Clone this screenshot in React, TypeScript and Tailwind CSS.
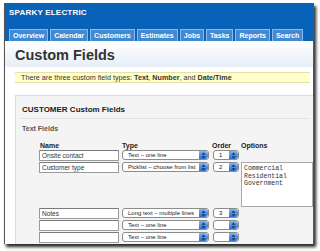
import React from 'react';

const tabs = ['Overview', 'Calendar', 'Customers', 'Estimates', 'Jobs', 'Tasks', 'Reports', 'Search'];

function Spinner() {
    return (
        <div className="h-full w-[9px] rounded-r-[3px] bg-gradient-to-b from-[#7fb2ee] to-[#2f6fd0] flex items-center justify-center">
            <svg width="5" height="7" viewBox="0 0 5 7">
                <path d="M2.5 0.5 L4.5 2.8 H0.5 Z" fill="#10306a" />
                <path d="M2.5 6.5 L4.5 4.2 H0.5 Z" fill="#10306a" />
            </svg>
        </div>
    );
}

function Select({ value, width }: { value: string; width: string }) {
    return (
        <div className={`${width} h-[10px] flex items-stretch rounded-[3px] border border-[#8c8c8c] bg-white overflow-hidden`}>
            <div className="flex-1 pl-[5px] text-[6px] leading-[8px] text-[#222] whitespace-nowrap overflow-hidden">{value}</div>
            <Spinner />
        </div>
    );
}

function NameInput({ value }: { value: string }) {
    return (
        <div className="w-[80px] h-[11px] border border-[#9a9a9a] border-t-[#7a7a7a] bg-white pl-[2px] text-[6.5px] leading-[9px] text-[#333] whitespace-nowrap">
            {value}
        </div>
    );
}

function Row({ name, type, order }: { name: string; type: string; order: string }) {
    return (
        <div className="flex items-start h-[11px]">
            <NameInput value={name} />
            <div className="ml-[3px]">
                <Select value={type} width="w-[87px]" />
            </div>
            <div className="ml-[4px]">
                <Select value={order} width="w-[26px]" />
            </div>
        </div>
    );
}

export default function App() {
    return (
        <div className="w-[320px] h-[251px] bg-white overflow-hidden font-['Liberation_Sans',Arial,sans-serif]">
            <div className="ml-[4px] mt-[3px] w-[310px] h-[241px] bg-white overflow-hidden border-l border-r border-[#555] shadow-[2px_3px_3px_rgba(0,0,0,0.85)]">
                {/* Header */}
                <div className="bg-[#0862b8] h-[38px] pt-[5px] pl-[4px] flex flex-col">
                    <div className="text-white font-bold text-[8px] leading-[10px] tracking-[0.2px]">SPARKY ELECTRIC</div>
                    <div className="mt-[11px] flex gap-[2px]">
                        {tabs.map((tab) => (
                            <div
                                key={tab}
                                className="h-[12px] px-[3px] bg-[#3f8ad2] border border-b-0 border-[#8cb9e6] text-white font-bold text-[7px] leading-[11px]"
                            >
                                {tab}
                            </div>
                        ))}
                    </div>
                </div>

                {/* Title */}
                <div className="h-[26px] bg-gradient-to-b from-white to-[#e7eef8] pl-[10px] pt-[5px]">
                    <h1 className="text-[14.5px] leading-[18px] font-bold text-[#333]">Custom Fields</h1>
                </div>

                {/* Notice */}
                <div className="mt-[5px] ml-[10px] mr-[3px] h-[11px] bg-[#ffffcc] border-y border-[#e6dfa8] pl-[6px] text-[7.2px] leading-[9px] text-[#333] whitespace-nowrap">
                    There are three custom field types: <b>Text</b>, <b>Number</b>, and <b>Date/Time</b>
                </div>

                {/* Panel */}
                <div className="mt-[12px] ml-[10px] h-[200px] bg-[#f4f4f4] border-t border-l border-[#dcdcdc]">
                    <div className="pt-[9px] pl-[6px] text-[8px] leading-[10px] font-bold text-[#222]">CUSTOMER Custom Fields</div>
                    <div className="mt-[3px] mx-[4px] border-t border-[#e0e0e0]" />
                    <div className="mt-[5px] pl-[6px] text-[7px] leading-[9px] font-bold text-[#555]">Text Fields</div>

                    <div className="mt-[8px] pl-[23px]">
                        <div className="flex text-[7px] leading-[9px] font-bold text-[#222]">
                            <div className="w-[83px] pl-[1px]">Name</div>
                            <div className="w-[90px]">Type</div>
                            <div className="w-[29px]">Order</div>
                            <div>Options</div>
                        </div>
                        <div className="flex flex-col gap-[1px]">
                            <Row name="Onsite contact" type="Text – one line" order="1" />
                            <div className="flex items-start h-[45px]">
                                <div className="flex items-start">
                                    <NameInput value="Customer type" />
                                    <div className="ml-[3px]">
                                        <Select value="Picklist – choose from list" width="w-[87px]" />
                                    </div>
                                    <div className="ml-[4px]">
                                        <Select value="2" width="w-[26px]" />
                                    </div>
                                </div>
                                <div className="ml-[2px] w-[80px] h-[45px] bg-white border border-[#a8a8a8] pl-[2px] pt-[2px] font-['Liberation_Mono',monospace] text-[6.5px] leading-[7.5px] text-[#333]">
                                    <div>Commercial</div>
                                    <div>Residential</div>
                                    <div>Government</div>
                                </div>
                            </div>
                            <Row name="Notes" type="Long text – multiple lines" order="3" />
                            <Row name="" type="Text – one line" order="" />
                            <Row name="" type="Text – one line" order="" />
                        </div>
                    </div>
                </div>
            </div>
        </div>
    );
}
